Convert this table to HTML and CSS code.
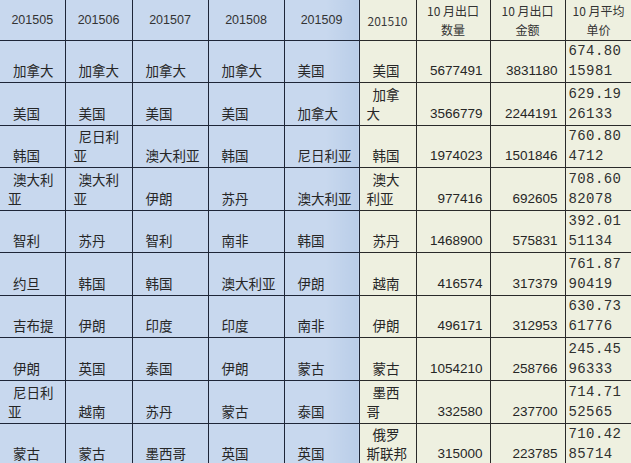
FILE: index.html
```html
<!DOCTYPE html>
<html lang="zh">
<head>
<meta charset="utf-8">
<link rel="stylesheet" href="styles.css">
</head>
<body>
<table class="sheet">
  <colgroup>
    <col class="w1"><col class="w2"><col class="w3"><col class="w4"><col class="w5"><col class="w6"><col class="w7"><col class="w8"><col class="w9">
  </colgroup>
  <thead>
    <tr class="head">
      <th class="b">201505</th><th class="b">201506</th><th class="b">201507</th><th class="b soft">201508</th><th class="b last">201509</th>
      <th class="y serif">201510</th>
      <th class="y">10 月出口<br>数量</th>
      <th class="y">10 月出口<br>金额</th>
      <th class="y">10 月平均<br>单价</th>
    </tr>
  </thead>
  <tbody>
    <tr>
      <td class="b t">加拿大</td><td class="b t">加拿大</td><td class="b t">加拿大</td><td class="b t soft">加拿大</td><td class="b t last">美国</td>
      <td class="y t6">美国</td><td class="y n">5677491</td><td class="y n">3831180</td><td class="y m">674.80<br>15981</td>
    </tr>
    <tr>
      <td class="b t">美国</td><td class="b t">美国</td><td class="b t">美国</td><td class="b t soft">美国</td><td class="b t last">加拿大</td>
      <td class="y t6">加拿<br>大</td><td class="y n">3566779</td><td class="y n">2244191</td><td class="y m">629.19<br>26133</td>
    </tr>
    <tr>
      <td class="b t">韩国</td><td class="b t">尼日利<br>亚</td><td class="b t">澳大利亚</td><td class="b t soft">韩国</td><td class="b t last">尼日利亚</td>
      <td class="y t6">韩国</td><td class="y n">1974023</td><td class="y n">1501846</td><td class="y m">760.80<br>4712</td>
    </tr>
    <tr>
      <td class="b t">澳大利<br>亚</td><td class="b t">澳大利<br>亚</td><td class="b t">伊朗</td><td class="b t soft">苏丹</td><td class="b t last">澳大利亚</td>
      <td class="y t6">澳大<br>利亚</td><td class="y n">977416</td><td class="y n">692605</td><td class="y m">708.60<br>82078</td>
    </tr>
    <tr>
      <td class="b t">智利</td><td class="b t">苏丹</td><td class="b t">智利</td><td class="b t soft">南非</td><td class="b t last">韩国</td>
      <td class="y t6">苏丹</td><td class="y n">1468900</td><td class="y n">575831</td><td class="y m">392.01<br>51134</td>
    </tr>
    <tr>
      <td class="b t">约旦</td><td class="b t">韩国</td><td class="b t">韩国</td><td class="b t soft">澳大利亚</td><td class="b t last">伊朗</td>
      <td class="y t6">越南</td><td class="y n">416574</td><td class="y n">317379</td><td class="y m">761.87<br>90419</td>
    </tr>
    <tr>
      <td class="b t">吉布提</td><td class="b t">伊朗</td><td class="b t">印度</td><td class="b t soft">印度</td><td class="b t last">南非</td>
      <td class="y t6">伊朗</td><td class="y n">496171</td><td class="y n">312953</td><td class="y m">630.73<br>61776</td>
    </tr>
    <tr>
      <td class="b t">伊朗</td><td class="b t">英国</td><td class="b t">泰国</td><td class="b t soft">伊朗</td><td class="b t last">蒙古</td>
      <td class="y t6">蒙古</td><td class="y n">1054210</td><td class="y n">258766</td><td class="y m">245.45<br>96333</td>
    </tr>
    <tr>
      <td class="b t">尼日利<br>亚</td><td class="b t">越南</td><td class="b t">苏丹</td><td class="b t soft">蒙古</td><td class="b t last">泰国</td>
      <td class="y t6">墨西<br>哥</td><td class="y n">332580</td><td class="y n">237700</td><td class="y m">714.71<br>52565</td>
    </tr>
    <tr>
      <td class="b t">蒙古</td><td class="b t">蒙古</td><td class="b t">墨西哥</td><td class="b t soft">英国</td><td class="b t last">英国</td>
      <td class="y t6">俄罗<br>斯联邦</td><td class="y n">315000</td><td class="y n">223785</td><td class="y m">710.42<br>85714</td>
    </tr>
  </tbody>
</table>
</body>
</html>
```

FILE: styles.css
```css
html, body {
  margin: 0;
  padding: 0;
  background: #eef0e0;
  overflow: hidden;
}

.sheet {
  border-collapse: collapse;
  table-layout: fixed;
  width: 632px;
  font-family: "Noto Sans CJK SC", "Liberation Sans", sans-serif;
  font-size: 13.5px;
  color: #262626;
}

.w1 { width: 65px; }
.w2 { width: 67px; }
.w3 { width: 76px; }
.w4 { width: 76px; }
.w5 { width: 75px; }
.w6 { width: 57px; }
.w7 { width: 74px; }
.w8 { width: 75px; }
.w9 { width: 67px; }

.sheet th,
.sheet td {
  border-right: 1px solid #1e2638;
  border-bottom: 1px solid #1e2638;
  padding: 0;
  overflow: hidden;
  white-space: nowrap;
}

.sheet .soft {
  border-left: 1px solid #6b7891;
}

.sheet .y {
  border-right-color: #2a2a2a;
  border-bottom-color: #2a2a2a;
}

.b { background: #c8d8ee; }
.b.last { background: linear-gradient(to right, #c8d8ee 55%, #b9cde8 100%); }
.y { background: #eef0e0; }

.head th {
  height: 40px;
  font-weight: normal;
  font-family: "Liberation Sans", "Noto Sans CJK SC", sans-serif;
  font-size: 12.5px;
  line-height: 19px;
  text-align: center;
  vertical-align: middle;
  color: #333;
}
.head th.serif {
  font-family: "Liberation Sans", sans-serif;
  font-size: 12px;
  color: #3a3a3a;
}
.head th.y {
  font-family: "Noto Sans CJK SC", "Liberation Sans", sans-serif;
  font-size: 12px;
  line-height: 19px;
}

tbody tr { height: 42px; }
tbody tr:nth-child(2),
tbody tr:nth-child(4),
tbody tr:nth-child(6),
tbody tr:nth-child(8),
tbody tr:nth-child(9) { height: 43px; }
tbody tr:nth-child(5) { height: 41px; }

.sheet td {
  vertical-align: bottom;
  line-height: 19px;
  padding-bottom: 2px;
}

.sheet td.t {
  padding-left: 8px;
  text-indent: 5px;
  text-align: left;
}
.sheet td.t6 {
  padding-left: 7px;
  text-indent: 6px;
  text-align: left;
}
.sheet td.n {
  font-family: "Liberation Sans", sans-serif;
  font-size: 13.5px;
  text-align: right;
  padding-right: 7px;
}
.sheet td.m {
  font-family: "Liberation Mono", monospace;
  font-size: 14px;
  letter-spacing: 0.4px;
  text-align: left;
  padding-left: 3px;
  line-height: 20px;
  padding-bottom: 1px;
  color: #303030;
}
```
